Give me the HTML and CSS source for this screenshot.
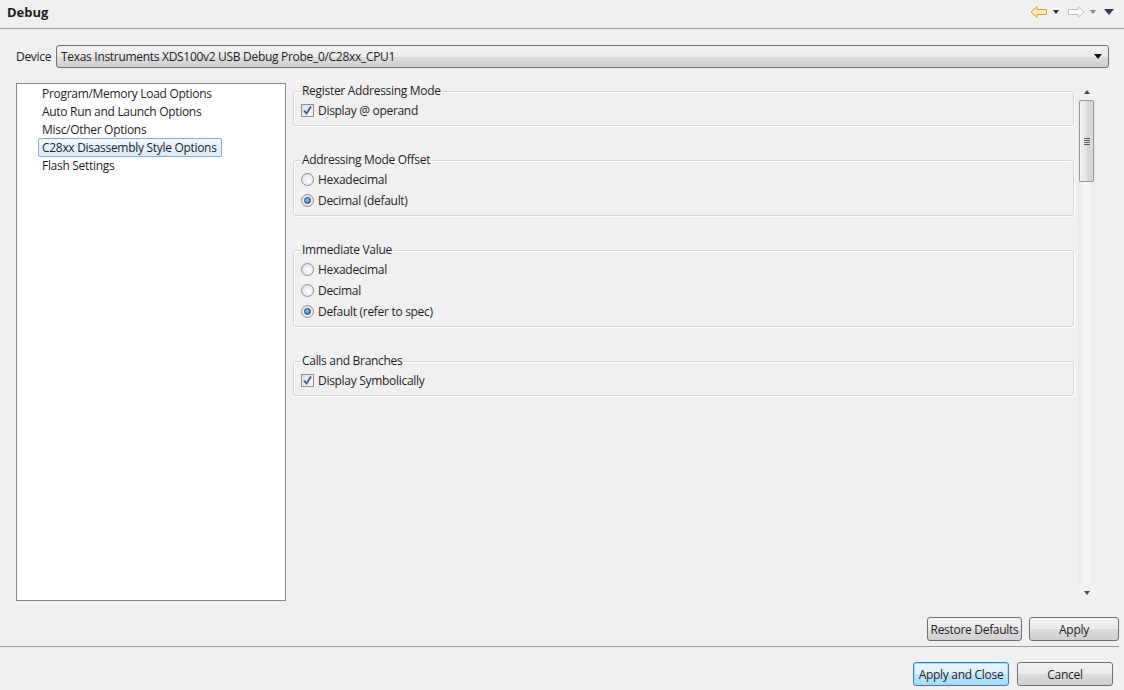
FILE: index.html
```html
<!DOCTYPE html>
<html lang="en">
<head>
  <meta charset="UTF-8">
  <title>Debug</title>
  <link rel="stylesheet" href="styles.css">
</head>
<body>
  <div class="header">
    <span class="title">Debug</span>
    <div class="nav">
      <svg width="18" height="14" viewBox="0 0 18 14"><path d="M1 7 L7 1.5 V4.5 H16.5 V9.5 H7 V12.5 Z" fill="#fcebb0" stroke="#d9a23a" stroke-width="1" stroke-linejoin="round"/></svg>
      <span class="tri"></span>
      <svg width="18" height="14" viewBox="0 0 18 14"><path d="M17 7 L11 1.5 V4.5 H1.5 V9.5 H11 V12.5 Z" fill="#fafafa" stroke="#c4c4c4" stroke-width="1" stroke-linejoin="round"/></svg>
      <span class="tri gray"></span>
      <span class="tri big"></span>
    </div>
  </div>

  <div class="device-row">
    <label>Device</label>
    <div class="combo">
      <span>Texas Instruments XDS100v2 USB Debug Probe_0/C28xx_CPU1</span>
      <span class="tri"></span>
    </div>
  </div>

  <div class="main">
    <ul class="tree">
      <li><span>Program/Memory Load Options</span></li>
      <li><span>Auto Run and Launch Options</span></li>
      <li><span>Misc/Other Options</span></li>
      <li><span class="selected">C28xx Disassembly Style Options</span></li>
      <li><span>Flash Settings</span></li>
    </ul>

    <div class="page">
      <div class="content">
        <fieldset>
          <legend>Register Addressing Mode</legend>
          <div class="row"><span class="check"><svg width="11" height="11" viewBox="0 0 11 11"><path d="M2 5.5 L4.5 8.5 L9 1.5" fill="none" stroke="#3b5998" stroke-width="1.8"/></svg></span>Display @ operand</div>
        </fieldset>
        <fieldset>
          <legend>Addressing Mode Offset</legend>
          <div class="row"><span class="radio"></span>Hexadecimal</div>
          <div class="row"><span class="radio on"></span>Decimal (default)</div>
        </fieldset>
        <fieldset>
          <legend>Immediate Value</legend>
          <div class="row"><span class="radio"></span>Hexadecimal</div>
          <div class="row"><span class="radio"></span>Decimal</div>
          <div class="row"><span class="radio on"></span>Default (refer to spec)</div>
        </fieldset>
        <fieldset>
          <legend>Calls and Branches</legend>
          <div class="row"><span class="check"><svg width="11" height="11" viewBox="0 0 11 11"><path d="M2 5.5 L4.5 8.5 L9 1.5" fill="none" stroke="#3b5998" stroke-width="1.8"/></svg></span>Display Symbolically</div>
        </fieldset>
      </div>
      <div class="scrollbar">
        <span class="arrow up"></span>
        <div class="thumb"><span class="grip"></span></div>
        <div class="track"></div>
        <span class="arrow down"></span>
      </div>
    </div>
  </div>

  <div class="page-buttons">
    <button>Restore Defaults</button>
    <button class="wide">Apply</button>
  </div>

  <div class="dialog-buttons">
    <button class="default">Apply and Close</button>
    <button class="cancel">Cancel</button>
  </div>
</body>
</html>
```

FILE: styles.css
```css
body {
  margin: 0;
  width: 1124px;
  height: 690px;
  overflow: hidden;
  background-color: #f0f0f0;
  font-family: "Open Sans", "Noto Sans", sans-serif;
  font-size: 12px;
  letter-spacing: -0.3px;
  color: #1e1e1e;
}
.header {
  height: 28px;
  border-bottom: 1px solid #a0a0a0;
  display: flex;
  align-items: center;
  justify-content: space-between;
  padding: 0 10px 0 7px;
}
.title {
  font-weight: bold;
  font-size: 13px;
  letter-spacing: 0;
  margin-top: -4px;
}
.nav {
  display: flex;
  align-items: center;
  gap: 3px;
  margin-top: -5px;
}
.tri {
  width: 0;
  height: 0;
  border-left: 3.5px solid transparent;
  border-right: 3.5px solid transparent;
  border-top: 4px solid #2b2b2b;
  margin: 0 5px 0 2px;
}
.tri.gray {
  border-top-color: #8a8a8a;
}
.tri.big {
  border-left-width: 5px;
  border-right-width: 5px;
  border-top: 6px solid #3b2f5e;
  margin: 0;
}
.device-row {
  display: flex;
  align-items: center;
  margin: 16px 15px 0 16px;
}
.device-row label {
  width: 40px;
}
.combo {
  flex: 1;
  height: 21px;
  border: 1px solid #707070;
  border-radius: 3px;
  background: linear-gradient(#f2f2f2 0%, #ebebeb 50%, #dddddd 51%, #cfcfcf 100%);
  display: flex;
  align-items: center;
  justify-content: space-between;
  padding: 0 4px;
}
.combo .tri {
  border-left-width: 4px;
  border-right-width: 4px;
  border-top: 5px solid #111;
  margin: 0 2px 0 0;
}
.main {
  display: flex;
  margin: 15px 0 0 16px;
  height: 518px;
}
.tree {
  list-style: none;
  margin: 0;
  padding: 0;
  width: 268px;
  height: 516px;
  border: 1px solid #828790;
  background-color: #fff;
}
.tree li {
  height: 18px;
  line-height: 17px;
  padding-left: 21px;
}
.tree li span {
  display: inline-block;
  padding: 0 4px 0 3px;
  border: 1px solid transparent;
}
.tree li .selected {
  border: 1px solid #84acdd;
  border-radius: 2px;
  background: linear-gradient(#f2f8fd, #dcebfb);
}
.page {
  display: flex;
  margin-left: 7px;
  width: 802px;
}
.content {
  width: 781px;
  margin-top: -1px;
}
fieldset {
  margin: 24px 0 0 0;
  padding: 0 6px 4px 7px;
  border: 1px solid #d5d5d5;
  border-radius: 3px;
  box-shadow: inset 1px 1px 0 #fff, 1px 1px 0 #fff;
}
fieldset:first-child {
  margin-top: 0;
}
fieldset + fieldset {
  margin-top: 25px;
}
legend {
  padding: 0 1px;
  line-height: 18px;
}
.row {
  height: 21px;
  display: flex;
  align-items: center;
}
.check {
  width: 11px;
  height: 11px;
  border: 1px solid #8e8f8f;
  background: linear-gradient(135deg, #dcdcdc, #fbfbfb);
  margin-right: 4px;
  display: flex;
  align-items: center;
  justify-content: center;
}
.radio {
  width: 11px;
  height: 11px;
  border: 1px solid #8e8f8f;
  border-radius: 50%;
  background: radial-gradient(circle at 60% 60%, #fdfdfd, #dadada);
  margin-right: 4px;
  display: flex;
  align-items: center;
  justify-content: center;
}
.radio.on::after {
  content: "";
  width: 5px;
  height: 5px;
  border-radius: 50%;
  background: radial-gradient(circle at 40% 40%, #9ed4f7, #1d5a96);
  border: 1px solid #1b3f68;
}
.scrollbar {
  width: 17px;
  margin-left: 4px;
  display: flex;
  flex-direction: column;
  align-items: center;
  background: linear-gradient(90deg, #e8e8e8, #f6f6f6 40%, #f6f6f6 60%, #e8e8e8);
}
.arrow {
  height: 17px;
  width: 100%;
  display: flex;
  align-items: center;
  justify-content: center;
  background-color: #f0f0f0;
}
.arrow::after {
  content: "";
  border-left: 3.5px solid transparent;
  border-right: 3.5px solid transparent;
}
.arrow.up::after {
  border-bottom: 4px solid #4a4a4a;
}
.arrow.down::after {
  border-top: 4px solid #4a4a4a;
}
.thumb {
  width: 13px;
  height: 80px;
  border: 1px solid #979797;
  border-radius: 2px;
  background: linear-gradient(90deg, #f2f2f2, #e4e4e4 50%, #d4d4d4 51%, #dcdcdc);
  display: flex;
  align-items: center;
  justify-content: center;
}
.grip {
  width: 6px;
  height: 7px;
  background: repeating-linear-gradient(#5a5a5a 0, #5a5a5a 1px, transparent 1px, transparent 2px);
}
.track {
  flex: 1;
}
button {
  font-family: "Open Sans", "Noto Sans", sans-serif;
  font-size: 12px;
  letter-spacing: -0.3px;
  color: #1e1e1e;
  height: 24px;
  border: 1px solid #707070;
  border-radius: 3px;
  background: linear-gradient(#f2f2f2 0%, #ebebeb 50%, #dddddd 51%, #cfcfcf 100%);
  padding: 0;
  white-space: nowrap;
}
.page-buttons {
  display: flex;
  justify-content: flex-end;
  gap: 7px;
  margin: 16px 5px 0 0;
  padding-bottom: 5px;
  border-bottom: 1px solid #a0a0a0;
}
.page-buttons button {
  width: 95px;
}
.page-buttons .wide {
  width: 90px;
}
.dialog-buttons {
  display: flex;
  justify-content: flex-end;
  gap: 8px;
  margin: 15px 11px 0 0;
}
.dialog-buttons button {
  width: 96px;
}
.dialog-buttons .default {
  border-color: #3c7fb1;
  background: linear-gradient(#eaf6fd 0%, #d9f0fc 50%, #bee6fd 51%, #a7d9f5 100%);
  box-shadow: inset 0 0 0 1px #9fdcf9;
}
```
